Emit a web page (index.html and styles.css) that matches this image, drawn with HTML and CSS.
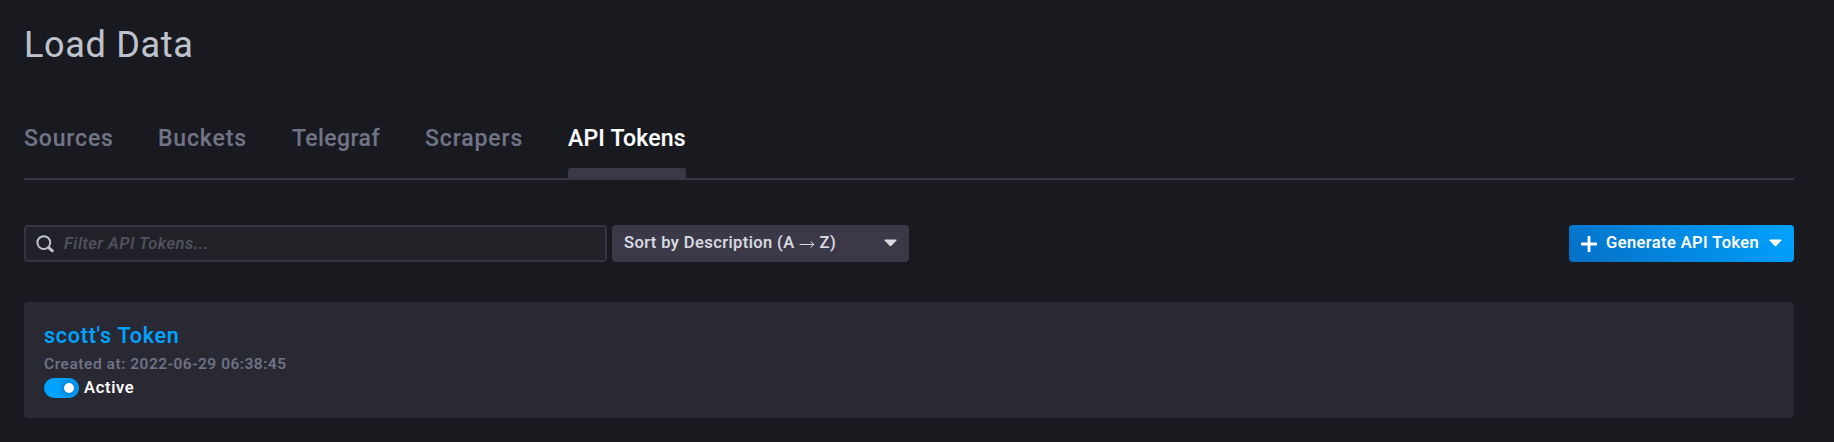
FILE: index.html
```html
<!DOCTYPE html>
<html lang="en">
<head>
<meta charset="utf-8">
<title>Load Data</title>
<link rel="stylesheet" href="styles.css">
</head>
<body>
<main class="page">
  <h1 class="page-title">Load Data</h1>
  <nav class="tabs">
    <a class="tab tab-sources">Sources</a>
    <a class="tab tab-buckets">Buckets</a>
    <a class="tab tab-telegraf">Telegraf</a>
    <a class="tab tab-scrapers">Scrapers</a>
    <a class="tab tab-tokens active">API Tokens</a>
  </nav>
  <div class="toolbar">
    <div class="search">
      <svg class="search-icon" width="18" height="18" viewBox="0 0 18 18"><circle cx="7.8" cy="7.6" r="6.4" fill="none" stroke="#bec2cc" stroke-width="2"/><path d="M12.8 12.6L16.3 15.8" stroke="#bec2cc" stroke-width="3" stroke-linecap="round"/></svg>
      <span class="placeholder">Filter API Tokens...</span>
    </div>
    <div class="sort">
      <span class="sort-label">Sort by Description (A <svg class="arrow" width="16" height="8" viewBox="0 0 16 8"><path d="M0.5 4.5H15M11.5 1.5L15 4.5L11.5 7.5" fill="none" stroke="currentColor"/></svg> Z)</span>
      <svg class="caret" width="13" height="8" viewBox="0 0 13 8"><path d="M1 .5H12Q13 .7 12.4 1.5L7.5 6.7Q6.5 7.6 5.5 6.7L.6 1.5Q0 .7 1 .5Z" fill="currentColor"/></svg>
    </div>
    <div class="generate">
      <svg class="plus" width="16" height="16" viewBox="0 0 16 16"><path d="M8 1V15M1 8H15" stroke="currentColor" stroke-width="2.8" stroke-linecap="round"/></svg>
      <span class="generate-label">Generate API Token</span>
      <svg class="caret" width="13" height="8" viewBox="0 0 13 8"><path d="M1 .5H12Q13 .7 12.4 1.5L7.5 6.7Q6.5 7.6 5.5 6.7L.6 1.5Q0 .7 1 .5Z" fill="currentColor"/></svg>
    </div>
  </div>
  <section class="card">
    <div class="token-name">scott's Token</div>
    <div class="created">Created at: 2022-06-29 06:38:45</div>
    <div class="status"><span class="toggle"><span class="knob"></span></span><span class="status-label">Active</span></div>
  </section>
</main>
</body>
</html>
```
FILE: styles.css
```css
* { box-sizing: border-box; }
body { margin: 0; background: #191920; font-family: Roboto, sans-serif; font-weight: 500; -webkit-text-stroke: .12px currentColor; }
.page { padding: 24px 40px 0 24px; height: 442px; white-space: nowrap; }
.page-title { margin: 0; height: 96px; font-size: 36px; line-height: 42px; font-weight: 400; letter-spacing: .7px; color: #bec2cc; }
.tabs { display: flex; gap: 45px; height: 60px; border-bottom: 2px solid #383644; }
.tab { display: flex; flex-direction: column; justify-content: space-between; height: 58px; font-size: 23px; line-height: 37px; letter-spacing: .85px; color: #707486; }
.tab-sources { width: 89px; }
.tab-buckets { width: 89px; }
.tab-telegraf { width: 88px; letter-spacing: .4px; }
.tab-scrapers { width: 98px; }
.tab-tokens { width: 118px; letter-spacing: .2px; }
.tab.active { color: #fff; }
.tab.active::after { content: ""; height: 10px; background: #3b3947; border-radius: 3px 3px 0 0; }
.toolbar { display: flex; margin-top: 45px; height: 37px; font-size: 16.5px; line-height: 35px; }
.search { display: flex; width: 583px; border: 2px solid #353442; border-radius: 4px; background: #212128; padding-left: 10px; }
.search-icon { margin-top: 8px; }
.placeholder { margin-left: 10px; line-height: 33px; font-style: italic; color: #51525f; letter-spacing: .5px; }
.sort { display: flex; justify-content: space-between; width: 297px; margin-left: 5px; padding: 0 12px; border-radius: 4px; background: #3b3947; color: #d8dae0; }
.sort-label { letter-spacing: .41px; }
.caret { margin-top: 14px; }
.generate { display: flex; width: 225px; margin-left: auto; padding: 0 12px; border-radius: 4px; background: linear-gradient(45deg, #066fc5, #00a3ff); color: #fff; }
.plus { margin-top: 11px; }
.generate-label { flex: 1; margin-left: 9px; letter-spacing: .42px; }
.card { display: flex; flex-direction: column; margin-top: 40px; height: 116px; padding: 20px; border-radius: 4px; background: #292933; }
.token-name { height: 33px; font-size: 21.5px; line-height: 28px; color: #00a3ff; letter-spacing: .75px; }
.created { height: 23px; font-size: 15.5px; line-height: 19px; color: #707486; letter-spacing: .55px; }
.status { display: flex; gap: 5px; height: 20px; font-size: 16.5px; line-height: 20px; color: #fff; }
.toggle { display: flex; align-items: center; justify-content: flex-end; width: 35px; height: 20px; padding-right: 5px; border-radius: 10px; background: #00a3ff; overflow: hidden; }
.knob { width: 10px; height: 10px; border-radius: 50%; background: #fff; box-shadow: 0 0 5px 2px #0878cf; }
.status-label { letter-spacing: .7px; }
```
